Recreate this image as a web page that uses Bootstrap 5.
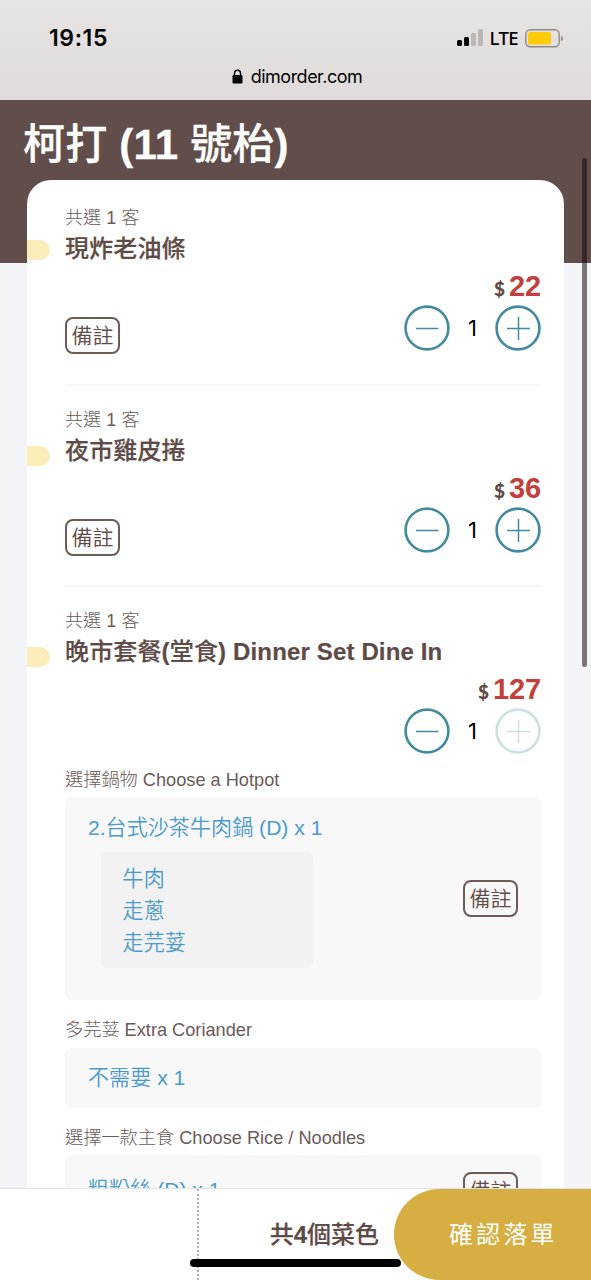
<!DOCTYPE html>
<html lang="zh-Hant">
<head>
<meta charset="utf-8">
<meta name="viewport" content="width=device-width, initial-scale=1">
<title>dimorder.com</title>
<link href="https://cdn.jsdelivr.net/npm/bootstrap@5.3.0/dist/css/bootstrap.min.css" rel="stylesheet">
<style>
  body { font-family: "Liberation Sans", "Noto Sans CJK TC", sans-serif; background: #f3f3f8; color: #5e4b47; height: 1280px; overflow: hidden; }
  b { font-weight: 700; }
  .screen { height: 1280px; }
  .browser-bar { height: 100px; background: linear-gradient(#e8e4e4, #e0dbda); color: #000; }
  .status-row { height: 54px; padding: 22px 28px 0 49px; }
  .clock { font: 600 23px/32px Inter, sans-serif; letter-spacing: .6px; }
  .network { font: 500 18.5px/32px "Noto Sans", sans-serif; letter-spacing: -.6px; margin: 0 7px 0 6px; }
  .address { height: 44px; font: 400 18px/44px Inter, sans-serif; letter-spacing: -.5px; padding: 1px 0 0 3px; gap: 8px; }
  .hero { height: 163px; background: #614e4a; }
  .hero h1 { font-size: 42px; line-height: 60px; font-weight: 500; padding: 15px 0 0 23px; color: #fff; letter-spacing: .2px; -webkit-text-stroke: .3px currentColor; }
  .order { margin: -83px 27px 0; height: 1008px; background: #fff; border-radius: 24px 24px 0 0; padding: 4px 23px 0 38px; overflow: hidden; }
  .dish { height: 201.7px; padding-top: 21px; border-bottom: 2px solid #f8f8f8; }
  .dish-set { height: auto; border: 0; }
  .picked { font-size: 18px; line-height: 26px; font-weight: 300; color: #6a5b58; letter-spacing: .1px; }
  .dish-name { font-size: 24px; line-height: 36px; font-weight: 500; margin: 0; letter-spacing: .15px; -webkit-text-stroke: .2px currentColor; }
  .marker { width: 23px; height: 20px; left: -38px; top: 9px; background: #fbedba; border-radius: 0 10px 10px 0; }
  .dish + .dish .marker { top: 13px; }
  .price { height: 38px; line-height: 39px; color: #c23f3e; font-size: 29px; font-weight: 700; letter-spacing: -.1px; }
  .price small { font: 900 19px/38px Lato, sans-serif; color: #5e4b47; margin-right: 4px; letter-spacing: 0; }
  .memo { width: 55px; height: 37px; border: 2px solid #6c5b57; border-radius: 8px; padding: 0; background: transparent; color: #5e4b47; font-size: 21px; line-height: 33px; font-weight: 350; display: block; }
  .dish .controls .memo { margin-top: 12px; }
  .qty { font: 400 22px/47px Inter, sans-serif; width: 45px; text-align: center; color: #000; }
  .option-label { font-size: 18.2px; line-height: 26px; font-weight: 300; color: #6a5b58; }
  .option { background: #f8f8f8; border-radius: 6px; color: #4a9acd; font-size: 21.1px; line-height: 32px; font-weight: 350; padding: 0 23px; }
  .extras { width: 212px; height: 116px; background: #f2f2f2; border-radius: 6px; padding: 11px 22px 9px; margin: 8px 0 0 12.6px; }
  .bottom-bar { height: 92px; background: #fff; border-top: 1px solid #e3e2e6; }
  .table-slot { width: 199px; border-right: 2px dotted #b3adad; }
  .total { width: 180px; font-size: 24px; font-weight: 500; line-height: 92px; -webkit-text-stroke: .2px currentColor; }
  .confirm { width: 240px; margin: 0 -43px 0 15px; height: 91px; border: 0; border-radius: 46px; background: #d6ae41; color: #fff; font-size: 24px; letter-spacing: 3.2px; font-weight: 400; padding: 0 0 0 55px; text-align: left; line-height: 91px; }
  .home-line { width: 211px; height: 8px; left: 190px; bottom: 13px; background: #000; border-radius: 4px; }
  .scroll-thumb { width: 5px; height: 509px; top: 158px; left: 582px; background: rgba(15, 5, 8, .53); border-radius: 3px; }
</style>
</head>
<body>
<svg width="0" height="0" class="position-absolute">
  <symbol id="minus" viewBox="0 0 46 46"><circle cx="23" cy="23" r="21.4" fill="none" stroke="currentColor" stroke-width="2.6"/><path d="M12 23.5H34.5" stroke="currentColor" stroke-width="1.5"/></symbol>
  <symbol id="plus" viewBox="0 0 46 46"><circle cx="23" cy="23" r="21.4" fill="none" stroke="currentColor" stroke-width="2.6"/><path d="M12 23.5H35M23.5 12V35" stroke="currentColor" stroke-width="1.5" fill="none"/></symbol>
</svg>
<div class="screen position-relative overflow-hidden d-flex flex-column">
  <header class="browser-bar flex-shrink-0">
    <div class="status-row d-flex align-items-center">
      <span class="clock me-auto">19:15</span>
      <svg width="27" height="18" viewBox="0 0 27 18"><rect x="0" y="11" width="5" height="6" rx="1.5"/><rect x="7" y="8" width="5" height="9" rx="1.5"/><g fill="#bcb8b8"><rect x="14" y="4" width="5" height="13" rx="1.5"/><rect x="21" y="0" width="5" height="17" rx="1.5"/></g></svg>
      <span class="network">LTE</span>
      <svg width="38" height="19" viewBox="0 0 38 19"><rect x=".8" y=".8" width="33.4" height="17" rx="4.5" fill="none" stroke="#8f8c8a" stroke-width="1.4"/><rect x="3" y="3" width="23" height="12.6" rx="2.2" fill="#ffcc0a"/><path d="M36 6.5q2 .8 2 3t-2 3z" fill="#8f8c8a"/></svg>
    </div>
    <div class="address d-flex justify-content-center align-items-center">
      <svg width="11" height="15" viewBox="0 0 11 15"><rect x=".5" y="6" width="10" height="8.5" rx="1.3"/><path d="M2.5 7V4.2a3 3 0 0 1 6 0V7" fill="none" stroke="#000" stroke-width="1.4"/></svg>
      <span>dimorder.com</span>
    </div>
  </header>
  <div class="hero flex-shrink-0"><h1 class="m-0">柯打<b> (11 </b>號枱<b>)</b></h1></div>
  <main class="order flex-shrink-0">
    <section class="dish">
      <div class="picked">共選 1 客</div>
      <h2 class="dish-name position-relative"><span class="marker position-absolute"></span>現炸老油條</h2>
      <div class="price text-end"><small>$</small>22</div>
      <div class="controls d-flex">
        <button class="memo me-auto">備註</button>
        <svg width="46" height="46" color="#448a9f"><use href="#minus"/></svg><span class="qty">1</span><svg width="46" height="46" color="#448a9f"><use href="#plus"/></svg>
      </div>
    </section>
    <section class="dish">
      <div class="picked">共選 1 客</div>
      <h2 class="dish-name position-relative"><span class="marker position-absolute"></span>夜市雞皮捲</h2>
      <div class="price text-end"><small>$</small>36</div>
      <div class="controls d-flex">
        <button class="memo me-auto">備註</button>
        <svg width="46" height="46" color="#448a9f"><use href="#minus"/></svg><span class="qty">1</span><svg width="46" height="46" color="#448a9f"><use href="#plus"/></svg>
      </div>
    </section>
    <section class="dish dish-set">
      <div class="picked">共選 1 客</div>
      <h2 class="dish-name position-relative"><span class="marker position-absolute"></span>晚市套餐<b>(</b>堂食<b>) Dinner Set Dine In</b></h2>
      <div class="price text-end"><small>$</small>127</div>
      <div class="controls d-flex justify-content-end">
        <svg width="46" height="46" color="#448a9f"><use href="#minus"/></svg><span class="qty">1</span><svg width="46" height="46" color="#cde0e1"><use href="#plus"/></svg>
      </div>
      <div class="option-label" style="margin-top:12px">選擇鍋物 Choose a Hotpot</div>
      <div class="option d-flex align-items-center" style="height:203px;margin-top:4px">
        <div class="align-self-start me-auto" style="padding-top:15px">
          <div>2.台式沙茶牛肉鍋 (D) x 1</div>
          <div class="extras"><div>牛肉</div><div>走蔥</div><div>走芫荽</div></div>
        </div>
        <button class="memo">備註</button>
      </div>
      <div class="option-label" style="margin-top:17px">多芫荽 Extra Coriander</div>
      <div class="option d-flex align-items-center" style="height:60px;margin-top:5px">不需要 x 1</div>
      <div class="option-label" style="margin-top:17px">選擇一款主食 Choose Rice / Noodles</div>
      <div class="option d-flex align-items-center" style="height:70px;margin-top:4px"><span class="me-auto">粗粉絲 (D) x 1</span><button class="memo">備註</button></div>
    </section>
  </main>
  <footer class="bottom-bar d-flex flex-shrink-0">
    <div class="table-slot flex-shrink-0"></div>
    <div class="total text-end flex-shrink-0">共<b>4</b>個菜色</div>
    <button class="confirm flex-shrink-0">確認落單</button>
  </footer>
  <div class="home-line position-absolute"></div>
  <div class="scroll-thumb position-absolute"></div>
</div>
<script src="https://cdn.jsdelivr.net/npm/bootstrap@5.3.0/dist/js/bootstrap.bundle.min.js"></script>
</body>
</html>
